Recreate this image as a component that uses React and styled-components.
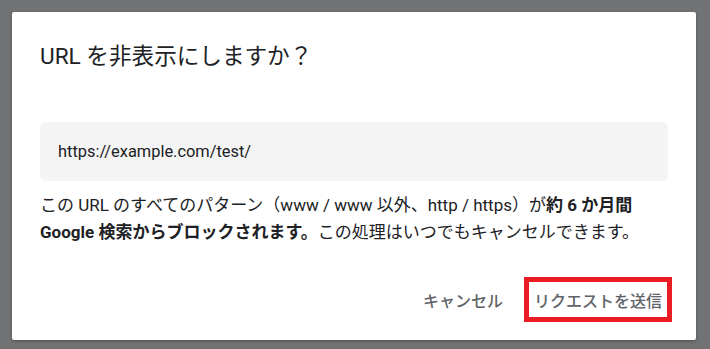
import React from "react";
import styled, { createGlobalStyle } from "styled-components";

const GlobalStyle = createGlobalStyle`
  html, body {
    margin: 0;
    padding: 0;
    background: #707274;
  }
  body {
    font-family: Roboto, "Noto Sans CJK JP", "Noto Sans", sans-serif;
    -webkit-font-smoothing: antialiased;
  }
`;

const Backdrop = styled.div`
  box-sizing: border-box;
  height: 100vh;
  padding: 12px 14px 9px 12px;
  display: flex;
`;

const Dialog = styled.div`
  flex: 1;
  display: flex;
  flex-direction: column;
  background: #ffffff;
  border-radius: 2px;
  box-shadow: 0 1px 3px rgba(0, 0, 0, 0.3);
  padding: 31px 24px 18px 28px;
`;

const Title = styled.h2`
  margin: 0;
  font-size: 22.6px;
  line-height: 28px;
  font-weight: 400;
  color: #202124;
`;

const UrlBox = styled.div`
  margin-top: 51px;
  margin-right: 4px;
  height: 59px;
  display: flex;
  align-items: center;
  padding: 0 18px;
  background: #f4f4f4;
  border-radius: 6px;
  font-size: 16.4px;
  color: #202124;
`;

const Message = styled.p`
  margin: 11px 0 0;
  font-size: 17px;
  line-height: 27px;
  color: #202124;

  strong {
    font-weight: 700;
  }
`;

const Actions = styled.div`
  margin-top: auto;
  display: flex;
  justify-content: flex-end;
  align-items: center;
  gap: 13px;
`;

const TextButton = styled.button`
  border: none;
  background: transparent;
  font-family: inherit;
  font-size: 16px;
  font-weight: 500;
  color: #5f6368;
  height: 35px;
  padding: 0 ${(p) => p.$pad || 8}px;
  cursor: pointer;
`;

const Highlight = styled.div`
  border: 5px solid #ec1c24;
  display: flex;
`;

export default function App() {
  return (
    <>
      <GlobalStyle />
      <Backdrop>
        <Dialog>
          <Title>URL を非表示にしますか？</Title>
          <UrlBox>https://example.com/test/</UrlBox>
          <Message>
            この URL のすべてのパターン（www / www 以外、http / https）が<strong>約 6 か月間</strong>
            <br />
            <strong>Google 検索からブロックされます。</strong>この処理はいつでもキャンセルできます。
          </Message>
          <Actions>
            <TextButton>キャンセル</TextButton>
            <Highlight>
              <TextButton $pad={5}>リクエストを送信</TextButton>
            </Highlight>
          </Actions>
        </Dialog>
      </Backdrop>
    </>
  );
}
